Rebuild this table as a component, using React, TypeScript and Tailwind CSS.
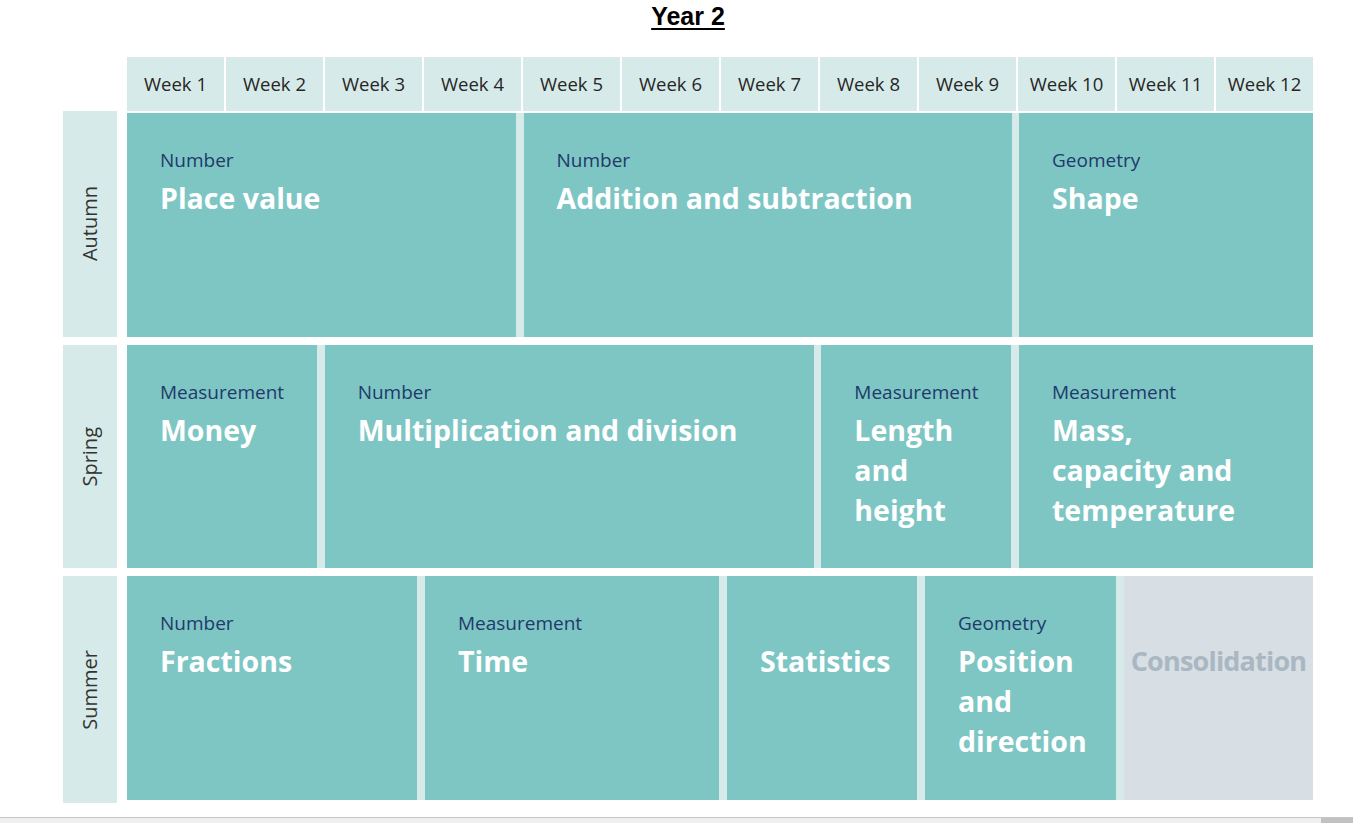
import React from "react";

type Block = {
  w: string;
  cat?: string;
  title: string[];
  muted?: boolean;
};

type Row = {
  season: string;
  cls: string;
  labelCls: string;
  blocks: Block[];
};

const weeks = Array.from({ length: 12 }, (_, i) => `Week ${i + 1}`);

const rows: Row[] = [
  {
    season: "Autumn",
    cls: "h-[226px] pt-[2px]",
    labelCls: "-mt-[2px]",
    blocks: [
      { w: "w-[389px]", cat: "Number", title: ["Place value"] },
      { w: "w-[488px]", cat: "Number", title: ["Addition and subtraction"] },
      { w: "w-[294px]", cat: "Geometry", title: ["Shape"] },
    ],
  },
  {
    season: "Spring",
    cls: "h-[223px] mt-[8px]",
    labelCls: "",
    blocks: [
      { w: "w-[190px]", cat: "Measurement", title: ["Money"] },
      { w: "w-[489px]", cat: "Number", title: ["Multiplication and division"] },
      { w: "w-[190px]", cat: "Measurement", title: ["Length", "and", "height"] },
      { w: "w-[294px]", cat: "Measurement", title: ["Mass,", "capacity and", "temperature"] },
    ],
  },
  {
    season: "Summer",
    cls: "h-[227px] mt-[8px] pb-[3px]",
    labelCls: "-mb-[3px]",
    blocks: [
      { w: "w-[290px]", cat: "Number", title: ["Fractions"] },
      { w: "w-[294px]", cat: "Measurement", title: ["Time"] },
      { w: "w-[190px]", title: ["Statistics"] },
      { w: "w-[191px]", cat: "Geometry", title: ["Position", "and", "direction"] },
      { w: "w-[189px]", title: ["Consolidation"], muted: true },
    ],
  },
];

const TopicBlock = ({ block }: { block: Block }) => (
  <div
    className={`${block.w} h-full pt-[35px] ${
      block.muted ? "bg-[#d7dee4] text-center" : "bg-[#7dc6c4] pl-[33px]"
    }`}
  >
    <div className="h-[24px] text-[19px] leading-[24px] text-[#22396a] whitespace-nowrap">
      {block.cat}
    </div>
    <div
      className={`mt-[6px] leading-[40px] font-bold whitespace-nowrap ${
        block.muted
          ? "text-[27px] tracking-[-0.03em] text-[#a9b7c3]"
          : "text-[28.5px] text-white"
      }`}
    >
      {block.title.map((line) => (
        <div key={line}>{line}</div>
      ))}
    </div>
  </div>
);

export default function App() {
  return (
    <div className="w-[1353px] h-[823px] flex flex-col bg-white font-['Open_Sans',sans-serif] overflow-hidden">
      <div className="pl-[63px] w-[1313px]">
        {/* Title */}
        <div className="pt-[2px] h-[57px] text-center">
          <span className="font-['Liberation_Sans',Arial,sans-serif] text-[25px] leading-[28px] font-bold text-black underline underline-offset-[3px] decoration-2">
            Year 2
          </span>
        </div>

        {/* Week headers */}
        <div className="ml-[64px] w-[1186px] h-[54px] grid grid-cols-12 gap-[2px]">
          {weeks.map((wk) => (
            <div
              key={wk}
              className="bg-[#d6ebe9] flex items-center justify-center text-[18.5px] text-[#262626] whitespace-nowrap"
            >
              {wk}
            </div>
          ))}
        </div>

        {/* Terms */}
        {rows.map((row) => (
          <div key={row.season} className={`flex gap-[10px] ${row.cls}`}>
            <div className={`w-[54px] bg-[#d6ebe9] flex items-center justify-center ${row.labelCls}`}>
              <span className="[writing-mode:vertical-rl] rotate-180 text-[20px] text-[#333]">
                {row.season}
              </span>
            </div>
            <div className="w-[1186px] h-full flex justify-between bg-[#d6ebe9]">
              {row.blocks.map((b, i) => (
                <TopicBlock key={i} block={b} />
              ))}
            </div>
          </div>
        ))}
      </div>

      {/* Horizontal scrollbar strip */}
      <div className="mt-auto h-[6px] flex border-t border-[#c6c6c6] bg-[#f0f0f0]">
        <div className="flex-1" />
        <div className="w-[32px] bg-[#c1c1c1]" />
      </div>
    </div>
  );
}
